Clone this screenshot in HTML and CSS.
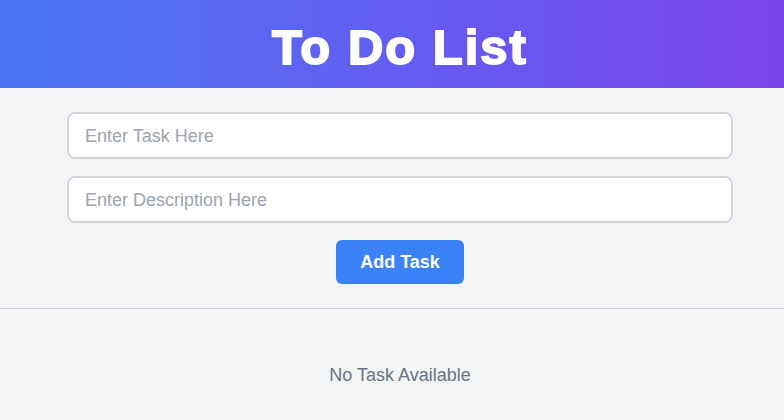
FILE: index.html
```html
<!DOCTYPE html>
<html lang="en">
<head>
<meta charset="utf-8">
<title>To Do List</title>
<link rel="stylesheet" href="styles.css">
</head>
<body>
<div class="app">
  <header class="header">
    <h1 class="title">To Do List</h1>
  </header>
  <form class="form">
    <input class="field" type="text" placeholder="Enter Task Here">
    <input class="field" type="text" placeholder="Enter Description Here">
    <button class="add-btn" type="button">Add Task</button>
  </form>
  <hr class="divider">
  <p class="empty">No Task Available</p>
</div>
</body>
</html>
```

FILE: styles.css
```css
html, body {
  margin: 0;
  padding: 0;
  overflow: hidden;
  background: #f3f4f6;
  font-family: "Liberation Sans", Arial, sans-serif;
}

.app {
  width: 800px;
  min-height: 420px;
}

.header {
  height: 88px;
  background: linear-gradient(90deg, #4a76f5 0%, #7c44ec 100%);
  display: flex;
  align-items: center;
  justify-content: center;
}

.title {
  margin: 0;
  color: #ffffff;
  font-family: "Liberation Sans", Arial, sans-serif;
  font-weight: 700;
  font-size: 49px;
  letter-spacing: 2px;
  -webkit-text-stroke: 1.8px #ffffff;
  line-height: 1;
  padding-top: 6px;
}

.form {
  width: 666px;
  margin: 24px auto 0;
  display: flex;
  flex-direction: column;
  align-items: center;
  gap: 17px;
}

.field {
  box-sizing: border-box;
  width: 100%;
  height: 47px;
  border: 2px solid #d1d5db;
  border-radius: 8px;
  background: #ffffff;
  padding: 1px 16px 0;
  font-family: "Liberation Sans", Arial, sans-serif;
  font-size: 18px;
  color: #111827;
  outline: none;
}

.field::placeholder {
  color: #9ca3af;
}

.add-btn {
  box-sizing: border-box;
  height: 44px;
  padding: 0 24px;
  border: none;
  border-radius: 6px;
  background: #3b82f6;
  color: #ffffff;
  font-family: "Liberation Sans", Arial, sans-serif;
  font-weight: 700;
  font-size: 18px;
  cursor: pointer;
}

.divider {
  margin: 24px 0 0;
  border: none;
  border-top: 1px solid #d1d5db;
  height: 0;
}

.empty {
  margin: 54px 0 0;
  text-align: center;
  color: #6b7280;
  font-size: 18px;
  line-height: 24px;
}
```
